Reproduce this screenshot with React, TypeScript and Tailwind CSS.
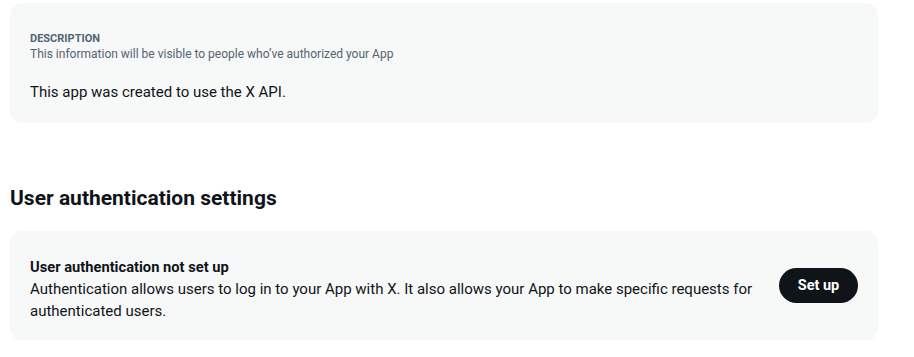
export default function App() {
  return (
    <div
      className="w-[914px] h-[357px] bg-white overflow-hidden text-[#0f1419]"
      style={{ fontFamily: 'Roboto, "Noto Sans", sans-serif' }}
    >
      <div className="w-[868px] ml-[10px] pt-[3px]">
        {/* description card */}
        <div className="bg-[#f7f8f8] rounded-[12px] px-5 pt-[30px] pb-[21px]">
          <div className="text-[11px] leading-[12px] font-bold text-[#536471]">DESCRIPTION</div>
          <div className="text-[12px] leading-[16px] text-[#536471] mt-[1px]">
            This information will be visible to people who’ve authorized your App
          </div>
          <div className="text-[15px] leading-[20px] mt-[20px]">This app was created to use the X API.</div>
        </div>

        <h2 className="text-[21px] leading-[26px] font-bold mt-[62px]">User authentication settings</h2>

        {/* auth card */}
        <div className="bg-[#f7f8f8] rounded-[12px] mt-[20px] pl-5 pr-5 pt-[27px] pb-[18px] flex items-center gap-6">
          <div className="flex-1">
            <div className="text-[14.7px] leading-[18px] font-bold">User authentication not set up</div>
            <div className="text-[15px] leading-[22px] mt-[2px]">
              Authentication allows users to log in to your App with X. It also allows your App to make specific requests for authenticated users.
            </div>
          </div>
          <button className="h-[35px] w-[79px] mb-[9px] rounded-full bg-[#0f1419] text-white text-[14.5px] font-bold shrink-0">
            Set up
          </button>
        </div>
      </div>
    </div>
  );
}
